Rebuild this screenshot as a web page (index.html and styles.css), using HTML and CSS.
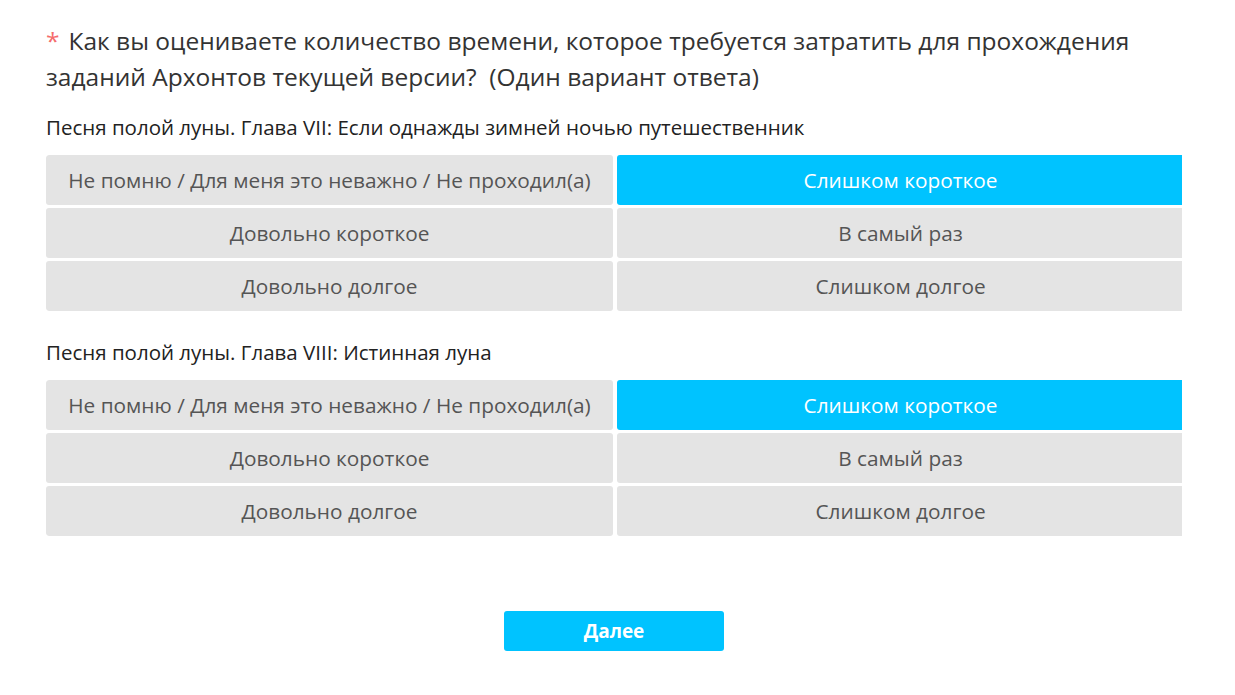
FILE: index.html
```html
<!DOCTYPE html>
<html lang="ru">
<head>
<meta charset="utf-8">
<link rel="stylesheet" href="styles.css">
</head>
<body>
<div class="page">
  <h1 class="question"><span class="req">*</span>Как вы оцениваете количество времени, которое требуется затратить для прохождения заданий Архонтов текущей версии?&nbsp; (Один вариант ответа)</h1>

  <div class="block">
    <div class="sub">Песня полой луны. Глава VII: Если однажды зимней ночью путешественник</div>
    <div class="grid-wrap">
      <div class="grid">
        <div class="opt">Не помню / Для меня это неважно / Не проходил(а)</div>
        <div class="opt sel">Слишком короткое</div>
        <div class="opt">Довольно короткое</div>
        <div class="opt">В самый раз</div>
        <div class="opt">Довольно долгое</div>
        <div class="opt">Слишком долгое</div>
      </div>
    </div>
  </div>

  <div class="block second">
    <div class="sub">Песня полой луны. Глава VIII: Истинная луна</div>
    <div class="grid-wrap">
      <div class="grid">
        <div class="opt">Не помню / Для меня это неважно / Не проходил(а)</div>
        <div class="opt sel">Слишком короткое</div>
        <div class="opt">Довольно короткое</div>
        <div class="opt">В самый раз</div>
        <div class="opt">Довольно долгое</div>
        <div class="opt">Слишком долгое</div>
      </div>
    </div>
  </div>

  <div class="actions">
    <button class="next">Далее</button>
  </div>
</div>
</body>
</html>
```
FILE: styles.css
```css
html, body {
  margin: 0;
  padding: 0;
  background: #fff;
}
body {
  font-family: "Open Sans", "Noto Sans", sans-serif;
  color: #333;
}
.page {
  padding: 23px 0 0 46px;
  width: 1136px;
}
.question {
  margin: 0;
  font-weight: normal;
  font-size: 24.5px;
  line-height: 36px;
  color: #333;
  padding-right: 20px;
}
.req {
  color: #f56c6c;
  margin-right: 9px;
}
.block {
  margin-top: 19px;
}
.block.second {
  margin-top: 28px;
}
.sub {
  font-size: 20.5px;
  line-height: 26px;
  color: #222;
  margin-bottom: 15px;
}
.grid-wrap {
  overflow: hidden;
  border-radius: 3px 0 0 3px;
}
.grid {
  display: grid;
  grid-template-columns: 567px 567px;
  column-gap: 4px;
  row-gap: 3px;
}
.opt {
  height: 50px;
  display: flex;
  align-items: center;
  justify-content: center;
  background: #e4e4e4;
  border-radius: 3px;
  font-size: 20.8px;
  color: #555;
}
.opt.sel {
  background: #00c3ff;
  color: #fff;
}
.actions {
  display: flex;
  justify-content: center;
  margin-top: 75px;
}
.next {
  width: 220px;
  height: 40px;
  border: none;
  border-radius: 3px;
  background: #00c3ff;
  color: #fff;
  font-family: inherit;
  font-size: 19px;
  font-weight: bold;
}
```
